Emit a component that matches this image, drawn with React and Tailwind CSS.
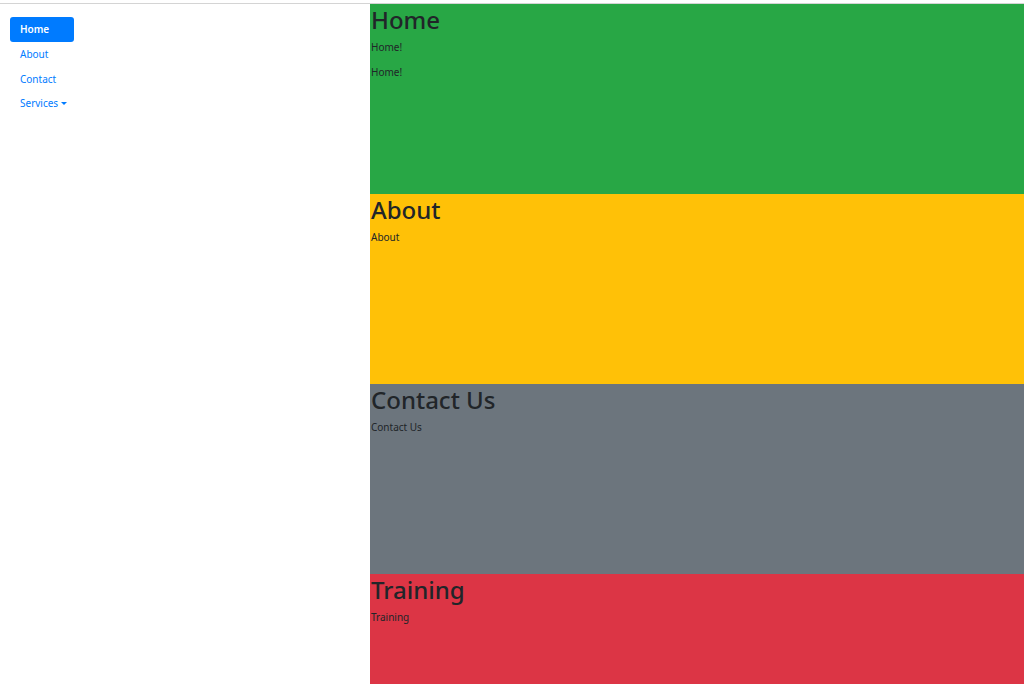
export default function App() {
  const font = { fontFamily: '"Noto Sans", "Open Sans", sans-serif' };
  const sections = [
    { title: "Home", bg: "bg-[#28a745]", lines: ["Home!", "Home!"] },
    { title: "About", bg: "bg-[#ffc107]", lines: ["About"] },
    { title: "Contact Us", bg: "bg-[#6c757d]", lines: ["Contact Us"] },
    { title: "Training", bg: "bg-[#dc3545]", lines: ["Training"] },
  ];
  return (
    <div className="h-[684px] overflow-hidden bg-white text-[#212529]" style={font}>
      <div className="h-[3px] bg-white" />
      <div className="h-px bg-[#d4d4d4]" />
      <div className="flex">
        <div className="w-[370px] shrink-0 px-[10px] pt-[13px]">
          <nav className="flex flex-col text-[10px] leading-[15px]">
            <a className="w-[64px] rounded-[3px] bg-[#007bff] px-[10px] py-[5px] font-semibold text-white">Home</a>
            <a className="px-[10px] py-[5px] text-[#007bff]">About</a>
            <a className="px-[10px] py-[4.5px] text-[#007bff]">Contact</a>
            <a className="flex items-center px-[10px] py-[4.5px] text-[#007bff]">
              Services
              <span className="ml-[3px] inline-block h-0 w-0 border-x-[3px] border-t-[3px] border-x-transparent border-t-[#007bff]" />
            </a>
          </nav>
        </div>
        <div className="flex-1">
          {sections.map((s) => (
            <section key={s.title} className={`h-[190px] ${s.bg}`}>
              <h3 className="mb-[5px] pl-px text-[24px] leading-[31px] font-medium">{s.title}</h3>
              {s.lines.map((l, i) => (
                <p key={i} className="mb-[10px] pl-px text-[10px] leading-[15px]">{l}</p>
              ))}
            </section>
          ))}
        </div>
      </div>
    </div>
  );
}
